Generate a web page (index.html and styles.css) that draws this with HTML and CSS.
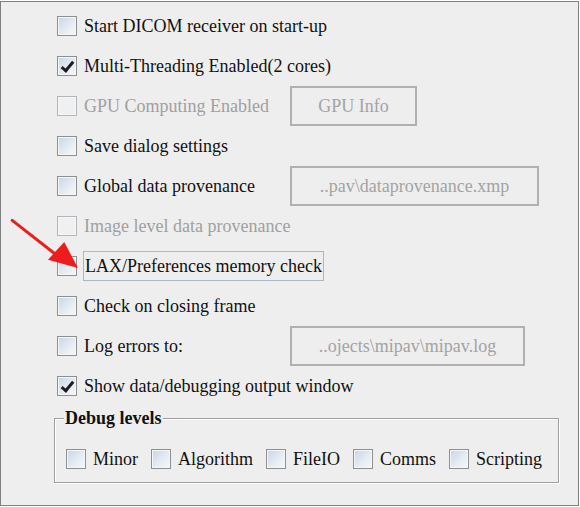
FILE: index.html
```html
<!DOCTYPE html>
<html>
<head>
<meta charset="utf-8">
<link rel="stylesheet" href="styles.css">
</head>
<body>
<div class="panel">
  <div class="rows">
    <div class="row"><i class="cb"></i><label class="lbl">Start DICOM receiver on start-up</label></div>
    <div class="row"><i class="cb"><i class="tick"></i></i><label class="lbl">Multi-Threading Enabled(2 cores)</label></div>
    <div class="row"><i class="cb off"></i><label class="lbl off">GPU Computing Enabled</label><div class="ctl"><div class="btn">GPU Info</div></div></div>
    <div class="row"><i class="cb"></i><label class="lbl">Save dialog settings</label></div>
    <div class="row"><i class="cb"></i><label class="lbl">Global data provenance</label><div class="ctl"><div class="field wide">..pav\dataprovenance.xmp</div></div></div>
    <div class="row"><i class="cb off"></i><label class="lbl off">Image level data provenance</label></div>
    <div class="row"><i class="cb"></i><label class="lbl focus">LAX/Preferences memory check</label></div>
    <div class="row"><i class="cb"></i><label class="lbl">Check on closing frame</label></div>
    <div class="row"><i class="cb"></i><label class="lbl">Log errors to:</label><div class="ctl"><div class="field">..ojects\mipav\mipav.log</div></div></div>
    <div class="row"><i class="cb"><i class="tick"></i></i><label class="lbl">Show data/debugging output window</label></div>
  </div>
  <div class="debug">
    <div class="legend">Debug levels</div>
    <div class="levels">
      <div class="item"><i class="cb"></i><label class="lbl">Minor</label></div>
      <div class="item"><i class="cb"></i><label class="lbl">Algorithm</label></div>
      <div class="item"><i class="cb"></i><label class="lbl">FileIO</label></div>
      <div class="item"><i class="cb"></i><label class="lbl">Comms</label></div>
      <div class="item"><i class="cb"></i><label class="lbl">Scripting</label></div>
    </div>
  </div>
  <i class="arrow-line"></i>
  <i class="arrow-head"></i>
</div>
</body>
</html>
```
FILE: styles.css
```css
html, body {
  margin: 0;
  padding: 0;
  background: #ffffff;
}
.panel {
  position: relative;
  box-sizing: border-box;
  margin-top: 1px;
  width: 579px;
  height: 505px;
  border: 1px solid #808080;
  background: #eeeeee;
  font-family: "Liberation Serif", "Times New Roman", Tinos, serif;
  font-size: 18px;
  color: #111111;
}
.rows {
  display: flex;
  flex-direction: column;
  padding: 4px 0 0 56px;
}
.row {
  display: flex;
  align-items: center;
  height: 40px;
  position: relative;
}
.cb {
  display: block;
  box-sizing: border-box;
  flex: none;
  position: relative;
  width: 20px;
  height: 20px;
  border: 1px solid #8e8f8f;
  background: linear-gradient(135deg, #c9d6e4 0%, #e4ebf2 55%, #f7f9fb 100%);
  box-shadow: inset 0 0 0 1px #f4f6f8;
}
.cb.off {
  border-color: #b2b6ba;
  background: #f0f0f0;
  box-shadow: inset 0 0 0 1px #f7f7f7;
}
.tick {
  display: block;
  position: absolute;
  left: 6px;
  top: 2px;
  width: 4px;
  height: 10px;
  border-right: 3px solid #1e1e1e;
  border-bottom: 3px solid #1e1e1e;
  transform: rotate(40deg);
}
.lbl {
  margin-left: 7px;
  white-space: nowrap;
  line-height: 20px;
  font-family: "Liberation Serif", "Times New Roman", Tinos, serif;
  font-size: 18px;
  font-style: normal;
}
.lbl.off {
  color: #a0a0a0;
}
.lbl.focus {
  margin-left: 6px;
  padding: 4px 1px 4px 1px;
  border: 1px solid #a9b7c6;
}
.ctl {
  position: absolute;
  left: 233px;
  top: 0;
  height: 40px;
  display: flex;
}
.btn, .field {
  box-sizing: border-box;
  height: 40px;
  border: 2px solid #b0b0b0;
  color: #a3a3a3;
  display: flex;
  align-items: center;
  justify-content: center;
  white-space: nowrap;
  font-family: "Liberation Serif", "Times New Roman", Tinos, serif;
  font-size: 18px;
}
.btn {
  width: 127px;
}
.field {
  width: 235px;
}
.field.wide {
  width: 249px;
}
.debug {
  position: relative;
  box-sizing: border-box;
  margin: 12px 0 0 53px;
  width: 505px;
  height: 65px;
  padding: 30px 0 0 11px;
  border: 1px solid #a0a0a0;
  box-shadow: 1px 1px 0 #ffffff, inset 1px 1px 0 #ffffff;
}
.legend {
  position: absolute;
  left: 9px;
  top: -11px;
  padding: 0 1px;
  background: #eeeeee;
  font-weight: bold;
  line-height: 20px;
  font-family: "Liberation Serif", "Times New Roman", Tinos, serif;
  font-size: 18px;
}
.levels {
  display: flex;
  align-items: center;
  gap: 13px;
}
.item {
  display: flex;
  align-items: center;
}
.arrow-line {
  display: block;
  position: absolute;
  left: 10px;
  top: 216px;
  width: 60px;
  height: 3px;
  background: #ee1c1c;
  border-radius: 2px;
  transform-origin: 0 50%;
  transform: rotate(38deg);
}
.arrow-head {
  display: block;
  position: absolute;
  left: 47px;
  top: 240px;
  width: 30px;
  height: 26px;
  background: #ee1c1c;
  clip-path: polygon(100% 100%, 0 68%, 54% 0);
}
```
